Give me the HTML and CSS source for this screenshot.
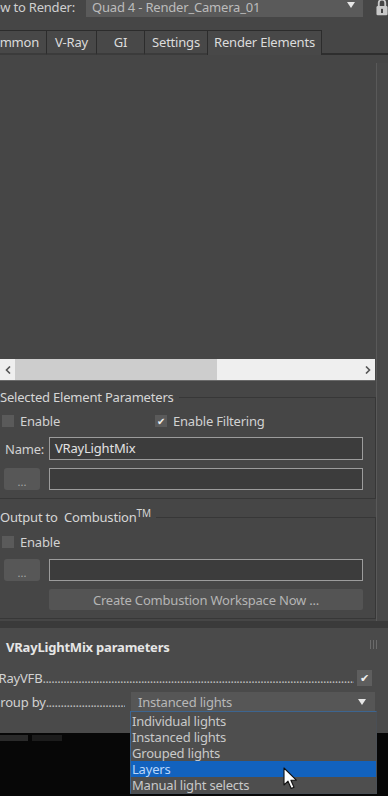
FILE: index.html
```html
<!DOCTYPE html>
<html lang="en">
<head>
  <meta charset="UTF-8">
  <title>Render Setup - Render Elements</title>
  <link rel="stylesheet" href="styles.css">
</head>
<body>

<div class="top-row">
  <div class="view-label"><span>View to Render:</span></div>
  <div class="combo">
    <span>Quad 4 - Render_Camera_01</span>
    <span class="combo-arrow"></span>
  </div>
  <svg class="lock" width="13" height="18" viewBox="0 0 13 18">
    <path d="M3 9V4.5a3.5 3.5 0 0 1 7 0V9" fill="none" stroke="#c9c9c9" stroke-width="2"/>
    <rect x="0.5" y="8" width="12" height="10" rx="1.5" fill="#c9c9c9"/>
    <rect x="5.5" y="11" width="2" height="4.5" fill="#3a3a3a"/>
  </svg>
</div>

<div class="tabs">
  <div class="tab tab-common">Common</div>
  <div class="tab tab-vray">V-Ray</div>
  <div class="tab tab-gi">GI</div>
  <div class="tab tab-settings">Settings</div>
  <div class="tab tab-elements active">Render Elements</div>
  <div class="tab-rest"></div>
</div>

<div class="panel">
  <div class="main-col">
    <div class="elements-list"></div>

    <div class="hscroll">
      <span class="scroll-btn">
        <svg width="6" height="8" viewBox="0 0 6 8"><path d="M5 0.5L1.5 4L5 7.5" fill="none" stroke="#555" stroke-width="1.6"/></svg>
      </span>
      <div class="track"><div class="thumb"></div></div>
      <span class="scroll-btn">
        <svg width="6" height="8" viewBox="0 0 6 8"><path d="M1 0.5L4.5 4L1 7.5" fill="none" stroke="#555" stroke-width="1.6"/></svg>
      </span>
    </div>

    <fieldset class="group group-selected">
      <legend>Selected Element Parameters</legend>
      <div class="check-row">
        <label class="check check-wide"><span class="box"></span>Enable</label>
        <label class="check"><span class="box">✔</span>Enable Filtering</label>
      </div>
      <div class="field-row">
        <span class="field-label">Name:</span>
        <div class="text-input">VRayLightMix</div>
      </div>
      <div class="field-row">
        <button type="button" class="browse">...</button>
        <div class="text-input"></div>
      </div>
    </fieldset>

    <fieldset class="group group-combustion">
      <legend>Output to&nbsp; Combustion<sup>TM</sup></legend>
      <div class="check-row">
        <label class="check"><span class="box"></span>Enable</label>
      </div>
      <div class="field-row field-row-loose">
        <button type="button" class="browse">...</button>
        <div class="text-input"></div>
      </div>
      <button type="button" class="create-btn">Create Combustion Workspace Now ...</button>
    </fieldset>
  </div>
  <div class="side-strip"></div>
</div>

<div class="separator"></div>

<div class="rollout">
  <div class="rollout-head">
    <span>VRayLightMix parameters</span>
    <svg class="grip" width="7" height="9" viewBox="0 0 7 9">
      <path d="M0.5 0v9M3.5 0v9M6.5 0v9" stroke="#6b6b6b" stroke-width="1"/>
    </svg>
  </div>
  <div class="param-row">
    <span class="param-label">VRayVFB</span>
    <span class="leader">......................................................................................................................</span>
    <span class="box box-param">✔</span>
  </div>
  <div class="param-row">
    <span class="param-label">Group by</span>
    <span class="leader">.........................................................</span>
    <div class="select">
      <span>Instanced lights</span>
      <span class="select-arrow"></span>
    </div>
  </div>
</div>

<div class="desktop">
  <span class="task-blob"></span>
  <span class="task-blob task-blob-dark"></span>
</div>

<ul class="dropdown-list">
  <li>Individual lights</li>
  <li>Instanced lights</li>
  <li>Grouped lights</li>
  <li class="selected">Layers</li>
  <li>Manual light selects</li>
</ul>

<svg class="cursor" width="15" height="23" viewBox="0 0 15 23">
  <path d="M1 1L1 18L5 14.2L8.2 21.5L11 20.3L7.9 13.2L13.3 13.2Z" fill="#fff" stroke="#111" stroke-width="1.1" stroke-linejoin="round"/>
</svg>

</body>
</html>
```

FILE: styles.css
```css
body {
  margin: 0;
  width: 388px;
  height: 796px;
  overflow: hidden;
  position: relative;
  display: flex;
  flex-direction: column;
  background-color: #464646;
  color: #d2d2d2;
  font-family: "Noto Sans", "Open Sans", sans-serif;
  font-size: 12px;
  letter-spacing: -0.2px;
}

/* top: view to render */
.top-row {
  display: flex;
  align-items: center;
  height: 23px;
  margin-top: -5px;
  flex-shrink: 0;
}
.view-label {
  width: 86px;
  flex-shrink: 0;
  display: flex;
  justify-content: flex-end;
  padding-right: 11px;
  box-sizing: border-box;
  white-space: nowrap;
  font-size: 13px;
  color: #cfcfcf;
}
.combo {
  width: 277px;
  height: 21px;
  flex-shrink: 0;
  display: flex;
  align-items: center;
  justify-content: space-between;
  padding: 0 8px 0 6px;
  box-sizing: border-box;
  background-color: #5a5a5a;
  color: #bcbcbc;
  font-size: 13px;
}
.combo-arrow {
  width: 0;
  height: 0;
  border-left: 4px solid transparent;
  border-right: 4px solid transparent;
  border-top: 6px solid #e6e6e6;
  margin-top: -4px;
}
.lock {
  margin-left: 13px;
}

/* tabs */
.tabs {
  display: flex;
  margin-top: 12px;
  height: 25px;
  flex-shrink: 0;
}
.tab {
  height: 25px;
  box-sizing: border-box;
  border: 1px solid #2c2c2c;
  border-right: none;
  border-bottom: 2px solid #3b3b3b;
  background-color: #484848;
  color: #dcdcdc;
  font-size: 13px;
  line-height: 22px;
  text-align: center;
  white-space: nowrap;
  flex-shrink: 0;
}
.tab-common {
  width: 70px;
  margin-left: -24px;
}
.tab-vray { width: 50px; }
.tab-gi { width: 48px; }
.tab-settings { width: 63px; }
.tab-elements { width: 115px; }
.tab.active {
  border-right: 1px solid #2c2c2c;
  border-bottom: none;
}
.tab-rest {
  flex: 1;
  border-bottom: 2px solid #2e2e2e;
}

/* main panel */
.panel {
  display: flex;
  flex-shrink: 0;
}
.main-col {
  width: 376px;
  padding-bottom: 2px;
}
.elements-list {
  height: 304px;
}
.hscroll {
  display: flex;
  align-items: center;
  height: 21px;
  border-bottom: 1px solid #6a6a6a;
  background-color: #efefef;
  margin-right: 1px;
}
.scroll-btn {
  width: 15px;
  display: flex;
  justify-content: center;
}
.track {
  flex: 1;
  height: 21px;
}
.thumb {
  width: 202px;
  height: 21px;
  background-color: #cdcdcd;
}
.side-strip {
  flex: 1;
  margin-top: 8px;
  border-left: 1px solid #595959;
  background-color: #484848;
}

/* group boxes */
.group {
  margin: 8px 0 0 -12px;
  padding: 0 12px 8px 11px;
  border: 1px solid #373737;
  min-width: 0;
}
.group-combustion {
  margin-top: 10px;
}
.group legend {
  padding: 0 5px 0 0;
  line-height: 17px;
  font-size: 13px;
  color: #d6d6d6;
}
.group sup {
  font-size: 10px;
  line-height: 0;
  vertical-align: 5px;
}
.check-row {
  display: flex;
  margin-top: 7px;
  height: 16px;
  align-items: center;
}
.group-combustion .check-row {
  margin-top: 8px;
}
.check {
  display: flex;
  align-items: center;
  margin-left: 2px;
  font-size: 13px;
  color: #d2d2d2;
}
.check-wide {
  width: 151px;
}
.box {
  width: 12px;
  height: 12px;
  margin-right: 6px;
  background-color: #5a5a5a;
  color: #f0f0f0;
  font-size: 10px;
  line-height: 12px;
  text-align: center;
  flex-shrink: 0;
}
.field-row {
  display: flex;
  align-items: center;
  margin-top: 8px;
}
.field-row-loose {
  margin-top: 9px;
}
.field-label {
  width: 49px;
  flex-shrink: 0;
  padding-left: 5px;
  box-sizing: border-box;
  font-size: 13px;
}
.text-input {
  width: 314px;
  height: 23px;
  flex-shrink: 0;
  box-sizing: border-box;
  border: 1px solid #9c9c9c;
  background-color: #3c3c3c;
  padding-left: 5px;
  line-height: 20px;
  font-size: 13px;
  color: #e2e2e2;
}
.field-row .browse + .text-input {
  height: 22px;
}
.browse {
  width: 36px;
  height: 22px;
  flex-shrink: 0;
  margin: 0 9px 0 4px;
  padding: 6px 0 0;
  border: none;
  border-radius: 3px;
  background-color: #575757;
  color: #a8a8a8;
  font-family: inherit;
  font-size: 11px;
  line-height: 12px;
}
.create-btn {
  display: block;
  width: 314px;
  height: 21px;
  margin: 8px 0 0 49px;
  padding: 0;
  border: none;
  border-radius: 2px;
  background-color: #545454;
  color: #b4b4b4;
  font-family: inherit;
  font-size: 13px;
  letter-spacing: -0.2px;
}

/* rollout */
.separator {
  height: 7px;
  background-color: #3a3a3a;
  flex-shrink: 0;
}
.rollout {
  height: 105px;
  box-sizing: border-box;
  flex-shrink: 0;
  background-color: #4a4a4a;
}
.rollout-head {
  display: flex;
  align-items: center;
  justify-content: space-between;
  padding: 11px 11px 7px 6px;
  line-height: 16px;
  font-size: 13px;
  font-weight: bold;
  color: #e6e6e6;
}
.grip {
  margin-top: -5px;
}
.param-row {
  display: flex;
  align-items: center;
  margin-top: 8px;
  height: 16px;
  font-size: 13px;
}
.param-row + .param-row {
  margin-top: 6px;
  height: 20px;
}
.param-label {
  margin-left: -9px;
  white-space: nowrap;
  flex-shrink: 0;
}
.leader {
  flex: 1;
  min-width: 0;
  overflow: hidden;
  white-space: nowrap;
  letter-spacing: -0.5px;
  color: #bdbdbd;
}
.box-param {
  width: 15px;
  height: 16px;
  margin: 0 16px 0 3px;
  background-color: #5e5e5e;
  line-height: 16px;
  font-size: 11px;
}
.select {
  width: 244px;
  height: 20px;
  flex-shrink: 0;
  margin: 0 13px 0 6px;
  box-sizing: border-box;
  display: flex;
  align-items: center;
  justify-content: space-between;
  padding: 0 9px 0 7px;
  background-color: #565656;
  color: #b8b8b8;
}
.select-arrow {
  width: 0;
  height: 0;
  border-left: 4px solid transparent;
  border-right: 4px solid transparent;
  border-top: 6px solid #e6e6e6;
}

.desktop {
  flex: 1;
  display: flex;
  align-items: flex-start;
  gap: 4px;
  background-color: #070707;
}
.task-blob {
  width: 28px;
  height: 6px;
  margin-top: 2px;
  background-color: #2a2a2a;
}
.task-blob-dark {
  width: 30px;
  background-color: #1c1c1c;
}

/* open combo list */
.dropdown-list {
  position: absolute;
  left: 130px;
  top: 711px;
  width: 247px;
  margin: 0;
  padding: 1px 0 0;
  box-sizing: border-box;
  list-style: none;
  border: 1px solid #3d6590;
  border-right-color: #4a4f55;
  border-bottom-color: #4a4f55;
  background-color: #4e4e4e;
  font-size: 13px;
  color: #c9c9c9;
}
.dropdown-list li {
  height: 16px;
  line-height: 16px;
  padding-left: 1px;
}
.dropdown-list .selected {
  background-color: #1262be;
  color: #b9d6fb;
}
.cursor {
  position: absolute;
  left: 283px;
  top: 767px;
}
```
